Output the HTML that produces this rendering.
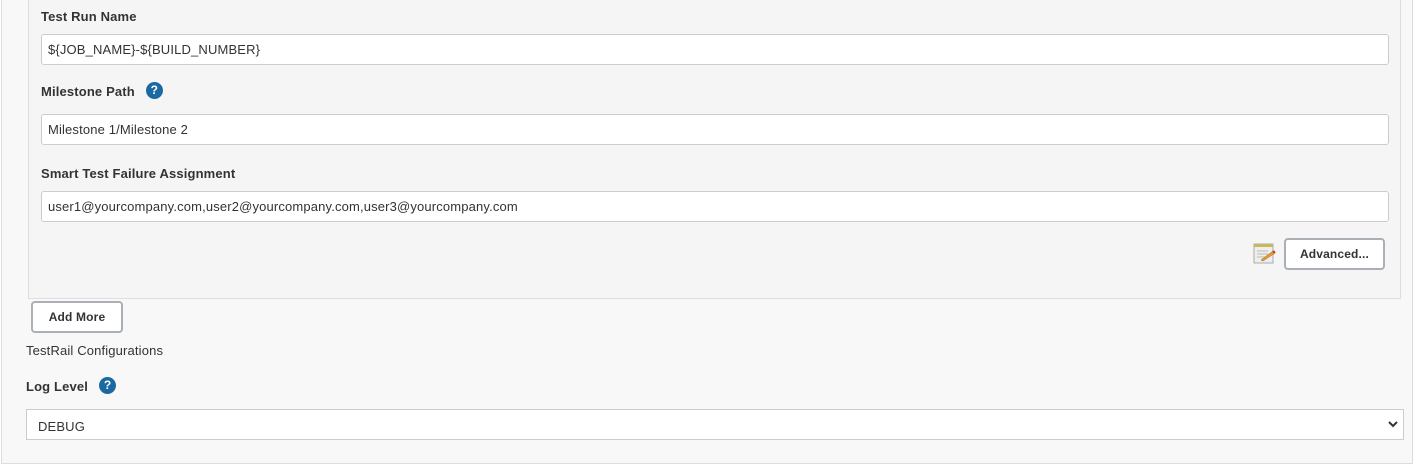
<!DOCTYPE html><html><head><style>
*{box-sizing:border-box}body{margin:0;width:1413px;height:465px;background:#fff;font-family:"Liberation Sans",sans-serif;font-size:13px;color:#333;position:relative;overflow:hidden;letter-spacing:.15px}
.outer{position:absolute;left:1px;top:-2px;width:1412px;height:466px;background:#f8f8f8;border:1px solid #ddd}
.panel{position:absolute;left:28px;top:-2px;width:1373px;height:301px;background:#f5f5f5;border:1px solid #ddd}
.lbl{position:absolute;font-weight:bold;font-size:13px;color:#333}
.inp{position:absolute;background:#fff;border:1px solid #ccc;border-radius:3px;padding-left:6px;line-height:29px;font-size:13px;color:#333}
.q{display:inline-block;width:17px;height:17px;border-radius:50%;background:#1a6aa1;color:#fff;font-size:12px;text-align:center;line-height:17px;font-weight:bold;vertical-align:middle;margin-left:11px;position:relative;top:-2px;letter-spacing:0}
.btn{position:absolute;background:#fff;border:2px solid #aab0b5;border-radius:4px;font-weight:bold;font-size:12px;text-align:center;color:#333}
</style></head><body>
<div class="outer"></div>
<div class="panel"></div>
<div class="lbl" style="left:41px;top:9px">Test Run Name</div>
<div class="inp" style="left:41px;top:34px;width:1348px;height:31px">${JOB_NAME}-${BUILD_NUMBER}</div>
<div class="lbl" style="left:41px;top:84px">Milestone Path<span class="q">?</span></div>
<div class="inp" style="left:41px;top:114px;width:1348px;height:31px">Milestone 1/Milestone 2</div>
<div class="lbl" style="left:41px;top:166px">Smart Test Failure Assignment</div>
<div class="inp" style="left:41px;top:191px;width:1348px;height:31px">user1@yourcompany.com,user2@yourcompany.com,user3@yourcompany.com</div>
<svg style="position:absolute;left:1253px;top:242px" width="23" height="22" viewBox="0 0 23 22"><rect x="1" y="2" width="19" height="19" fill="#eee" stroke="#aaa"/><rect x="1" y="2" width="19" height="3" fill="#c8b860"/><path d="M4 9h11M4 12h11M4 15h8" stroke="#bbb"/><path d="M8 18l12-9 2 2-12 8z" fill="#e0a030" stroke="#a06010" stroke-width=".5"/><path d="M20 9l2 2" stroke="#d33" stroke-width="2"/></svg>
<div class="btn" style="left:1284px;top:238px;width:101px;height:32px;line-height:28px">Advanced...</div>
<div class="btn" style="left:31px;top:301px;width:92px;height:32px;line-height:28px">Add More</div>
<div style="position:absolute;left:26px;top:343px;font-size:13px">TestRail Configurations</div>
<div class="lbl" style="left:26px;top:379px">Log Level<span class="q">?</span></div>
<div class="inp" style="left:26px;top:409px;width:1378px;height:31px;border-radius:0;padding-left:11px;line-height:33px">DEBUG<svg style="position:absolute;right:5px;top:11px" width="10" height="8" viewBox="0 0 10 8"><path d="M1 1l4 4 4-4" stroke="#333" stroke-width="2" fill="none"/></svg></div>
</body></html>
